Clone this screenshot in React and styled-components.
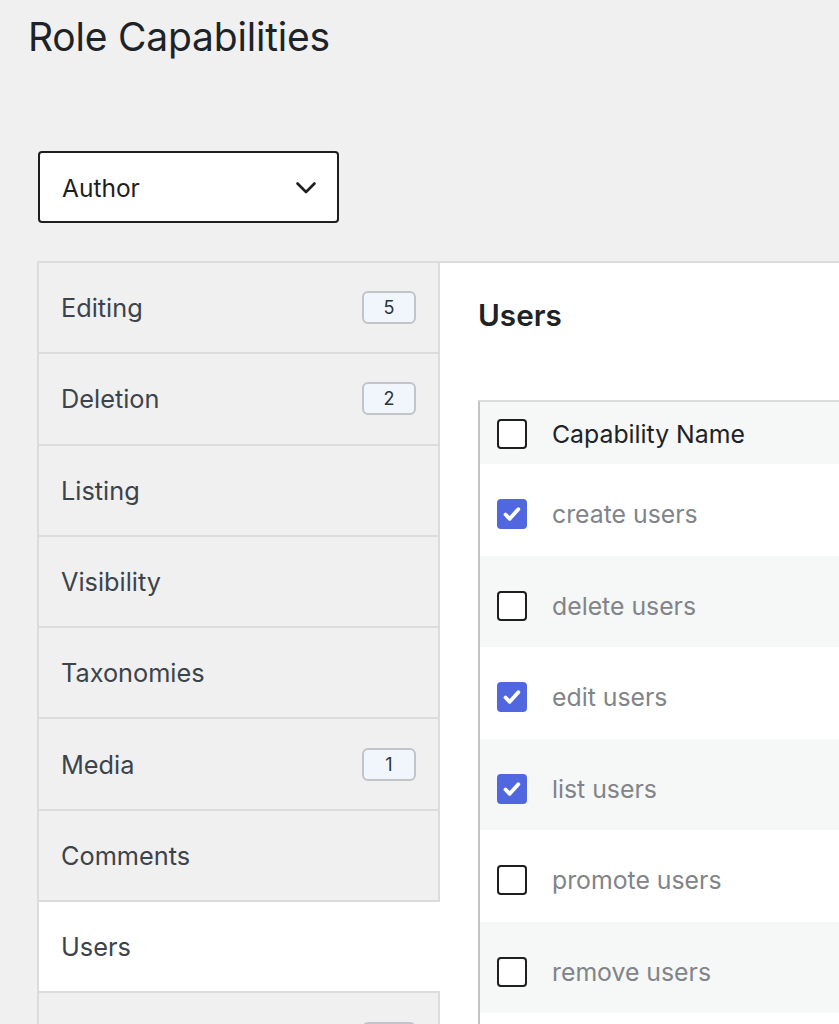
import React from 'react';
import styled, { createGlobalStyle } from 'styled-components';

const GlobalStyle = createGlobalStyle`
  html, body {
    margin: 0;
    padding: 0;
    background: #f0f0f1;
    font-family: Inter, "Noto Sans", "Liberation Sans", sans-serif;
    color: #1d2327;
  }
`;

const groups = [
  { name: 'Editing', count: 5 },
  { name: 'Deletion', count: 2 },
  { name: 'Listing' },
  { name: 'Visibility' },
  { name: 'Taxonomies' },
  { name: 'Media', count: 1 },
  { name: 'Comments' },
  { name: 'Users', active: true },
  { name: 'Admin', count: 3 },
];

const caps = [
  { name: 'create users', checked: true },
  { name: 'delete users', checked: false },
  { name: 'edit users', checked: true },
  { name: 'list users', checked: true },
  { name: 'promote users', checked: false },
  { name: 'remove users', checked: false },
  { name: 'add users', checked: false },
];

const CheckIcon = () => (
  <svg width="24" height="24" viewBox="0 0 24 24" fill="none">
    <path
      d="M5.5 12.5l4.2 4.3 8.6-9.6"
      stroke="#fff"
      strokeWidth="3.8"
      strokeLinecap="round"
      strokeLinejoin="round"
    />
  </svg>
);

const Chevron = () => (
  <svg width="22" height="14" viewBox="0 0 22 14" fill="none">
    <path
      d="M2.5 2.5l8.5 8.5 8.5-8.5"
      stroke="#1e1e1e"
      strokeWidth="2.6"
      strokeLinecap="round"
      strokeLinejoin="round"
    />
  </svg>
);

const App = () => {
  return (
    <>
      <GlobalStyle />
      <Page>
        <Title>Role Capabilities</Title>
        <RoleSelect>
          <span>Author</span>
          <Chevron />
        </RoleSelect>
        <Editor>
          <Sidebar>
            {groups.map((g) => (
              <GroupItem key={g.name} $active={g.active}>
                <span>{g.name}</span>
                {g.count && <Badge>{g.count}</Badge>}
              </GroupItem>
            ))}
          </Sidebar>
          <Content>
            <SectionTitle>Users</SectionTitle>
            <Table>
              <HeaderRow>
                <Checkbox $checked={false} />
                <HeaderLabel>Capability Name</HeaderLabel>
              </HeaderRow>
              {caps.map((c, i) => (
                <CapRow key={c.name} $striped={i % 2 === 1}>
                  <Checkbox $checked={c.checked}>
                    {c.checked && <CheckIcon />}
                  </Checkbox>
                  <CapLabel>{c.name}</CapLabel>
                </CapRow>
              ))}
            </Table>
          </Content>
        </Editor>
      </Page>
    </>
  );
};

export default App;

const Page = styled.div`
  padding: 14px 0 0 28px;
  height: 1024px;
  box-sizing: border-box;
  overflow: hidden;
`;

const Title = styled.h1`
  margin: 0;
  font-size: 39px;
  font-weight: 400;
  line-height: 46px;
  color: #1d2327;
  letter-spacing: -0.2px;
`;

const RoleSelect = styled.div`
  margin: 91px 0 0 10px;
  width: 301px;
  height: 72px;
  box-sizing: border-box;
  border: 2px solid #1e1e1e;
  border-radius: 4px;
  background: #fff;
  display: flex;
  align-items: center;
  justify-content: space-between;
  padding: 2px 20px 0 22px;
  font-size: 24.5px;
  color: #1e1e1e;
`;

const Editor = styled.div`
  display: flex;
  margin: 38px 0 0 9px;
`;

const Sidebar = styled.div`
  width: 403px;
  flex: none;
  display: flex;
  flex-direction: column;
  border-top: 2px solid #dcdcde;
  border-left: 2px solid #dcdcde;
  box-sizing: border-box;
`;

const GroupItem = styled.div`
  height: 91.3px;
  flex: none;
  box-sizing: border-box;
  display: flex;
  align-items: center;
  justify-content: space-between;
  padding: 0 22px 0 22px;
  font-size: 25.3px;
  color: #3c434a;
  background: ${(p) => (p.$active ? '#fff' : '#f0f0f1')};
  border-bottom: 2px solid #dcdcde;
  border-right: 2px solid ${(p) => (p.$active ? '#fff' : '#dcdcde')};
  ${(p) => p.$active && 'margin-right: -2px;'}
`;

const Badge = styled.div`
  width: 54px;
  height: 33px;
  box-sizing: border-box;
  border: 2px solid #c3c4c7;
  border-radius: 6px;
  background: #f0f6fc;
  display: flex;
  align-items: center;
  justify-content: center;
  font-size: 18px;
  color: #2c3338;
`;

const Content = styled.div`
  flex: 1;
  background: #fff;
  border-top: 2px solid #dcdcde;
  padding: 0 0 0 38px;
  min-width: 0;
`;

const SectionTitle = styled.h2`
  margin: 33px 0 0;
  font-size: 29.7px;
  font-weight: 600;
  line-height: 38px;
  color: #1d2327;
`;

const Table = styled.div`
  margin-top: 66px;
  border-top: 2px solid #dcdcde;
  border-left: 2px solid #c3c4c7;
`;

const HeaderRow = styled.div`
  height: 62px;
  display: flex;
  align-items: center;
  gap: 25px;
  padding: 2px 0 0 17px;
  box-sizing: border-box;
  background: #f6f7f7;
`;

const CapRow = styled.div`
  height: 91.5px;
  box-sizing: border-box;
  display: flex;
  align-items: center;
  gap: 25px;
  padding: 9px 0 0 17px;
  background: ${(p) => (p.$striped ? '#f6f7f7' : '#fff')};
`;

const Checkbox = styled.div`
  width: 30px;
  height: 30px;
  flex: none;
  box-sizing: border-box;
  border-radius: 4px;
  border: 2px solid ${(p) => (p.$checked ? '#5067e0' : '#1e1e1e')};
  background: ${(p) => (p.$checked ? '#5067e0' : '#fff')};
  display: flex;
  align-items: center;
  justify-content: center;
`;

const HeaderLabel = styled.span`
  font-size: 24.8px;
  color: #1d2327;
`;

const CapLabel = styled.span`
  font-size: 24.8px;
  color: #818488;
`;
